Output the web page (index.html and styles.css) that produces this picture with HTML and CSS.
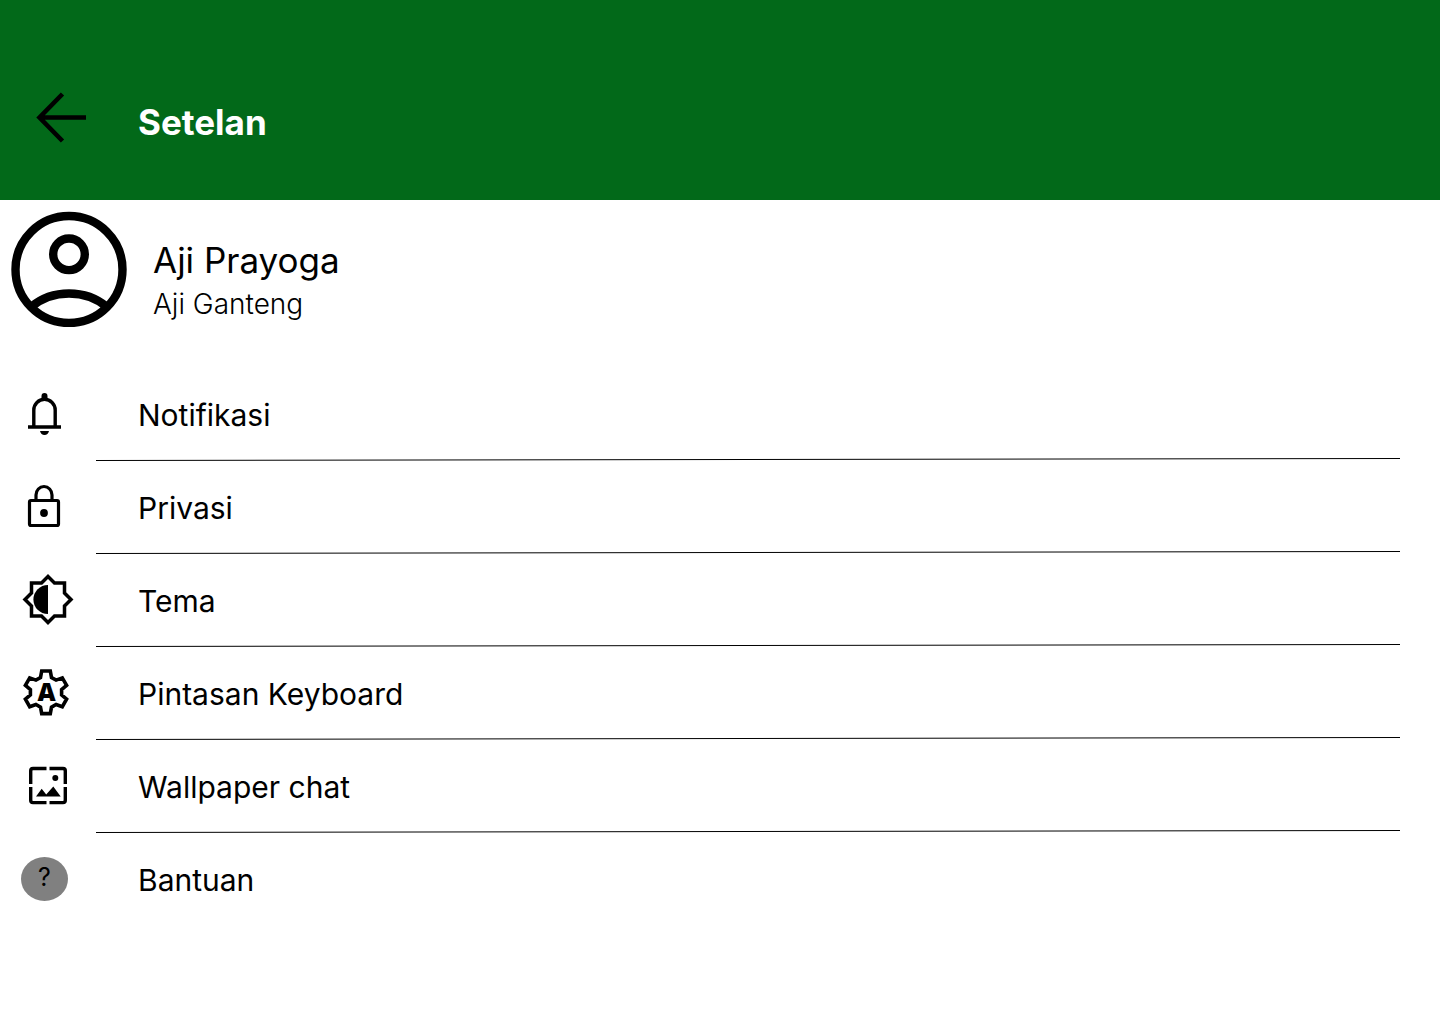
FILE: index.html
```html
<!DOCTYPE html>
<html lang="id">
<head>
<meta charset="utf-8">
<meta name="viewport" content="width=device-width, initial-scale=1">
<title>Setelan</title>
<link rel="stylesheet" href="styles.css">
</head>
<body>
<header class="topbar">
  <button class="back" type="button" aria-label="Kembali">
    <svg width="52" height="52" viewBox="0 0 52 52" fill="none" stroke="#000" stroke-width="4.600"><path d="M28.500 2 5.500 25.500 28.500 49M5.500 25.500H52"/></svg>
  </button>
  <h1 class="title">Setelan</h1>
</header>
<main>
  <section class="profile">
    <svg class="avatar" width="116" height="116" viewBox="0 0 116 116" fill="none" stroke="#000" stroke-width="8.400" aria-hidden="true">
      <circle cx="58" cy="58.500" r="53.500"/>
      <circle cx="58" cy="43.300" r="15.800"/>
      <path d="M20 96Q36 82.500 58 82.500T96 96"/>
    </svg>
    <div class="who">
      <h2 class="name">Aji Prayoga</h2>
      <p class="status">Aji Ganteng</p>
    </div>
  </section>
  <nav class="menu">
    <a class="item" href="#notifikasi">
      <svg class="icon" viewBox="0 0 96 93" aria-hidden="true"><path d="M33.800 58V42a10.700 10.700 0 0 1 21.400 0V58" fill="none" stroke="#000" stroke-width="3.400"/><path d="M28 57.300H61V60.700H28ZM41.500 31V28a3 3 0 0 1 6 0V31ZM40 63H49Q48 67 44.500 67T40 63Z"/></svg>
      <span class="label">Notifikasi</span>
      <svg class="rule" viewBox="0 0 1304 3" preserveAspectRatio="none" aria-hidden="true"><path d="M0 2.500 1304 .5"/></svg>
    </a>
    <a class="item" href="#privasi">
      <svg class="icon" viewBox="0 0 96 93" aria-hidden="true"><g fill="none" stroke="#000" stroke-width="3.200"><rect x="29.500" y="39.500" width="29" height="25" rx="1.500"/><path d="M36 39V34a8 8.500 0 0 1 16 0V39"/></g><circle cx="44" cy="52" r="3.900"/></svg>
      <span class="label">Privasi</span>
      <svg class="rule" viewBox="0 0 1304 3" preserveAspectRatio="none" aria-hidden="true"><path d="M0 2.500 1304 .5"/></svg>
    </a>
    <a class="item" href="#tema">
      <svg class="icon" viewBox="0 0 96 93" aria-hidden="true"><g transform="translate(48 45.500)"><path d="M0-23 6.500-16.500H16.500V-6.500L23 0 16.500 6.500V16.500H6.500L0 23-6.500 16.500H-16.500V6.500L-23 0-16.500-6.500V-16.500H-6.500Z" fill="none" stroke="#000" stroke-width="3.500"/><path d="M0-14.600A14.600 14.600 0 0 0 0 14.600Z"/></g></svg>
      <span class="label">Tema</span>
      <svg class="rule" viewBox="0 0 1304 3" preserveAspectRatio="none" aria-hidden="true"><path d="M0 2.500 1304 .5"/></svg>
    </a>
    <a class="item" href="#pintasan">
      <svg class="icon" viewBox="0 0 96 93" aria-hidden="true"><path transform="translate(46 45.300)" d="M-4.300-21.300H4.300L5.500-14.800 10.100-12.200 16.300-14.400 20.600-6.900 15.600-2.600V2.600L20.600 6.900 16.300 14.400 10.100 12.200 5.500 14.800 4.300 21.300H-4.300L-5.500 14.800-10.100 12.200-16.300 14.400-20.600 6.900-15.600 2.600V-2.600L-20.600-6.900-16.300-14.400-10.100-12.200-5.500-14.800Z" fill="none" stroke="#000" stroke-width="3.600"/><text class="glyph-a" x="46.500" y="54">A</text></svg>
      <span class="label">Pintasan Keyboard</span>
      <svg class="rule" viewBox="0 0 1304 3" preserveAspectRatio="none" aria-hidden="true"><path d="M0 2.500 1304 .5"/></svg>
    </a>
    <a class="item" href="#wallpaper">
      <svg class="icon" viewBox="0 0 96 93" aria-hidden="true"><path d="M46.500 28.500H33Q30.700 28.500 30.700 30.800V44M49.500 28.500H63Q65.300 28.500 65.300 30.800V44M46.500 62.600H33Q30.700 62.600 30.700 60.300V47M49.500 62.600H63Q65.300 62.600 65.300 60.300V47" fill="none" stroke="#000" stroke-width="3.400"/><circle cx="55.300" cy="38" r="3"/><path d="M36 56.500 41.700 48.700 46.200 54.500 53.300 46.500 60.700 56.500Z"/></svg>
      <span class="label">Wallpaper chat</span>
      <svg class="rule" viewBox="0 0 1304 3" preserveAspectRatio="none" aria-hidden="true"><path d="M0 2.500 1304 .5"/></svg>
    </a>
    <a class="item" href="#bantuan">
      <svg class="icon" viewBox="0 0 96 93" aria-hidden="true"><ellipse cx="44.500" cy="46" rx="23.500" ry="22" fill="#808080"/><text class="glyph-q" x="44.500" y="53">?</text></svg>
      <span class="label">Bantuan</span>
    </a>
  </nav>
</main>
</body>
</html>
```
FILE: styles.css
```css
* { box-sizing: border-box; }
body {
  margin: 0;
  background: #fff;
  color: #000;
  font-family: Inter, "Liberation Sans", sans-serif;
}
h1, h2, p { margin: 0; }
svg { display: block; }

.topbar {
  display: flex;
  align-items: center;
  gap: 52px;
  min-height: 200px;
  padding: 36px 34px 0;
  background: #026919;
}
.back {
  padding: 0;
  border: 0;
  background: none;
  cursor: pointer;
}
.title {
  padding-top: 8px;
  color: #fff;
  font-size: 35px;
  line-height: 44px;
  font-weight: 700;
}

.profile {
  display: flex;
  align-items: flex-start;
  gap: 26px;
  padding: 11px;
}
.avatar { flex: none; }
.who { padding-top: 27px; }
.name {
  font-size: 35px;
  line-height: 44px;
  font-weight: 400;
}
.status {
  font-size: 28px;
  line-height: 44px;
  font-weight: 300;
}

.menu { padding: 30px 40px 0 0; }
.item {
  display: grid;
  grid-template-columns: 96px 1fr;
  grid-template-rows: 90px 3px;
  color: inherit;
  text-decoration: none;
}
.icon {
  grid-row: 1 / 3;
  width: 96px;
  height: 93px;
}
.label {
  align-self: center;
  padding: 4px 0 0 42px;
  font-size: 30px;
  line-height: 40px;
}
.rule {
  grid-column: 2;
  width: 100%;
  height: 3px;
  fill: none;
  stroke: #000;
  stroke-width: 1px;
}
.glyph-a {
  font: 800 25px "Open Sans", "Noto Sans", sans-serif;
  text-anchor: middle;
}
.glyph-q {
  font-size: 25px;
  text-anchor: middle;
}
```
